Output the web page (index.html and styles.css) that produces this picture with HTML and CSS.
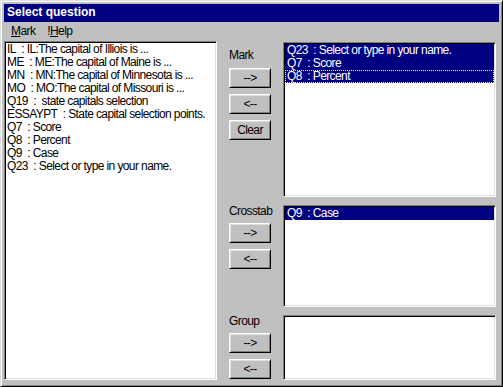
FILE: index.html
```html
<!DOCTYPE html>
<html>
<head>
	<link rel="stylesheet" href="styles.css">
</head>
<body>
	<div class="window">
		<div class="titlebar">Select question</div>

		<div class="menubar">
			<span class="menu"><u>M</u>ark</span>
			<span class="menu">!<u>H</u>elp</span>
		</div>

		<div class="content">
			<div class="listbox questions">
				<div class="row">IL&nbsp; : IL:The capital of Illiois is ...</div>
				<div class="row">ME&nbsp; : ME:The capital of Maine is ...</div>
				<div class="row">MN&nbsp; : MN:The capital of Minnesota is ...</div>
				<div class="row">MO&nbsp; : MO:The capital of Missouri is ...</div>
				<div class="row">Q19&nbsp; :&nbsp; state capitals selection</div>
				<div class="row">ESSAYPT&nbsp; : State capital selection points.</div>
				<div class="row">Q7&nbsp; : Score</div>
				<div class="row">Q8&nbsp; : Percent</div>
				<div class="row">Q9&nbsp; : Case</div>
				<div class="row">Q23&nbsp; : Select or type in your name.</div>
			</div>

			<div class="side">
				<div class="section mark">
					<div class="controls">
						<div class="label">Mark</div>
						<button class="btn">--&gt;</button>
						<button class="btn">&lt;--</button>
						<button class="btn">Clear</button>
					</div>
					<div class="listbox">
						<div class="row selected">Q23&nbsp; : Select or type in your name.</div>
						<div class="row selected">Q7&nbsp; : Score</div>
						<div class="row selected focus">Q8&nbsp; : Percent</div>
					</div>
				</div>

				<div class="section crosstab">
					<div class="controls">
						<div class="label">Crosstab</div>
						<button class="btn">--&gt;</button>
						<button class="btn">&lt;--</button>
					</div>
					<div class="listbox">
						<div class="row selected">Q9&nbsp; : Case</div>
					</div>
				</div>

				<div class="section group">
					<div class="controls">
						<div class="label">Group</div>
						<button class="btn">--&gt;</button>
						<button class="btn">&lt;--</button>
					</div>
					<div class="listbox"></div>
				</div>
			</div>
		</div>
	</div>
</body>
</html>
```

FILE: styles.css
```css
* {
	box-sizing: border-box;
}

body {
	margin: 0;
	width: 503px;
	height: 387px;
	overflow: hidden;
	background: #c0c0c0;
	font-family: "Liberation Sans", Arial, sans-serif;
	font-size: 12px;
	letter-spacing: -0.6px;
	color: #000;
}

.window {
	width: 503px;
	height: 387px;
	background: #c0c0c0;
	border: 1px solid;
	border-color: #dfdfdf #000 #000 #dfdfdf;
	box-shadow: inset 1px 1px #fff, inset -1px -1px #808080;
	padding: 3px;
	display: flex;
	flex-direction: column;
}

.titlebar {
	height: 18px;
	background: #000080;
	color: #fff;
	font-weight: bold;
	letter-spacing: 0;
	line-height: 17px;
	padding-left: 3px;
}

.menubar {
	height: 19px;
	display: flex;
	align-items: center;
	padding-left: 1px;
}

.menu {
	padding: 0 6px;
	line-height: 13px;
}

.content {
	flex: 1;
	display: flex;
	padding: 0 3px 3px 0;
}

.listbox {
	background: #fff;
	border: 1px solid;
	border-color: #808080 #fff #fff #808080;
	box-shadow: inset 1px 1px #000, inset -1px -1px #dfdfdf;
	padding: 1px;
	overflow: hidden;
}

.questions {
	width: 213px;
	height: 339px;
}

.row {
	height: 13px;
	line-height: 13px;
	padding-left: 2px;
	white-space: nowrap;
}

.questions .row {
	padding-left: 1px;
}

.selected {
	background: #000080;
	color: #fff;
}

.focus {
	outline: 1px dotted #ffff80;
	outline-offset: -1px;
}

.side {
	flex: 1;
	display: flex;
	flex-direction: column;
	gap: 8px;
	padding-top: 1px;
}

.section {
	display: flex;
}

.section .listbox {
	flex: 1;
}

.mark {
	height: 155px;
}

.crosstab {
	height: 102px;
}

.group {
	height: 65px;
}

.controls {
	width: 66px;
	padding-left: 12px;
	display: flex;
	flex-direction: column;
	align-items: flex-start;
	gap: 6px;
}

.label {
	line-height: 13px;
	margin-bottom: -1px;
}

.mark .label {
	margin-top: 7px;
	margin-bottom: 0;
}

.btn {
	width: 42px;
	height: 20px;
	padding: 0;
	margin: 0;
	font: inherit;
	letter-spacing: inherit;
	color: #000;
	background: #c0c0c0;
	border: 1px solid;
	border-color: #fff #000 #000 #fff;
	box-shadow: inset 1px 1px #dfdfdf, inset -1px -1px #808080;
	line-height: 16px;
}
```
